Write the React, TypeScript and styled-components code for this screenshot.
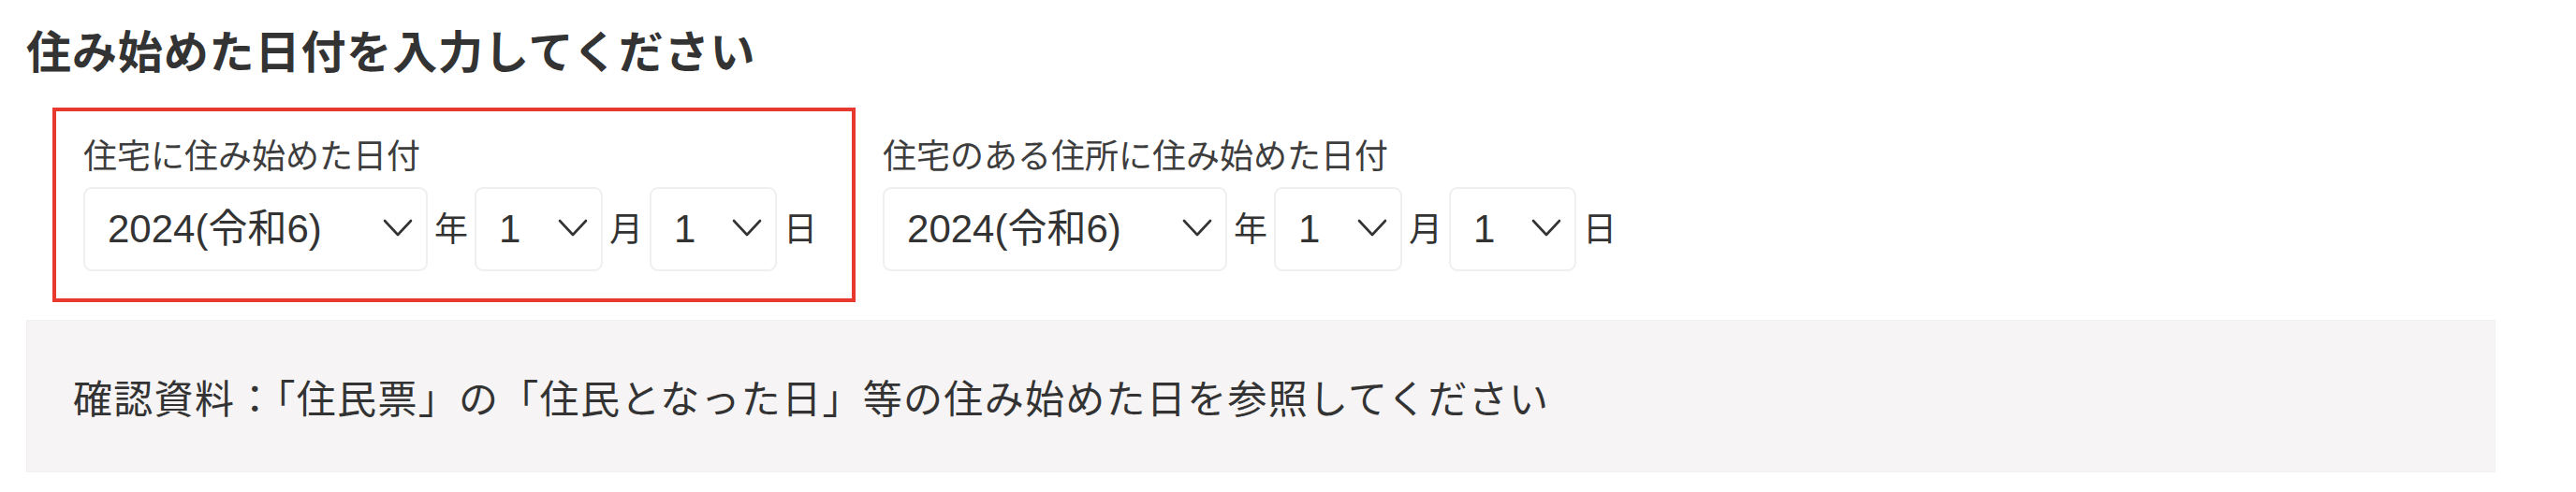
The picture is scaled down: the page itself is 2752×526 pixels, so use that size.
import React from 'react'
import styled, { createGlobalStyle } from 'styled-components'

const GlobalStyle = createGlobalStyle`
  body {
    margin: 0;
    background: #ffffff;
    color: #333333;
    font-family: "Liberation Sans", "Noto Sans CJK JP", sans-serif;
  }
`

type DateValue = { year: string; month: string; day: string }

const fields: { label: string; value: DateValue; highlighted: boolean }[] = [
  {
    label: '住宅に住み始めた日付',
    value: { year: '2024(令和6)', month: '1', day: '1' },
    highlighted: true,
  },
  {
    label: '住宅のある住所に住み始めた日付',
    value: { year: '2024(令和6)', month: '1', day: '1' },
    highlighted: false,
  },
]

function Chevron() {
  return (
    <svg width="32" height="20" viewBox="0 0 32 20" fill="none">
      <polyline
        points="2,2 16,17 30,2"
        stroke="#333"
        strokeWidth="2.6"
        strokeLinecap="round"
        strokeLinejoin="round"
      />
    </svg>
  )
}

function DateSelect({ value, width }: { value: string; width: number }) {
  return (
    <SelectBox $width={width}>
      <SelectValue>{value}</SelectValue>
      <Chevron />
    </SelectBox>
  )
}

export default function App() {
  return (
    <>
      <GlobalStyle />
      <Page>
        <Heading>住み始めた日付を入力してください</Heading>

        <FieldRow>
          {fields.map((field) => (
            <FieldGroup key={field.label} $highlighted={field.highlighted}>
              <FieldLabel>{field.label}</FieldLabel>
              <DateRow>
                <DateSelect value={field.value.year} width={368} />
                <Unit>年</Unit>
                <DateSelect value={field.value.month} width={137} />
                <Unit>月</Unit>
                <DateSelect value={field.value.day} width={136} />
                <Unit>日</Unit>
              </DateRow>
            </FieldGroup>
          ))}
        </FieldRow>

        <Note>
          確認資料：「住民票」の「住民となった日」等の住み始めた日を参照してください
        </Note>
      </Page>
    </>
  )
}

const Page = styled.div`
  display: flex;
  flex-direction: column;
  align-items: flex-start;
  padding: 19px 0 0 28px;
`

const Heading = styled.h2`
  margin: 0;
  font-family: "Noto Sans CJK JP", sans-serif;
  font-size: 48px;
  font-weight: 700;
  line-height: 67px;
  letter-spacing: 0.9px;
  color: #333333;
`

const FieldRow = styled.div`
  display: flex;
  align-items: flex-start;
  gap: 25px;
  margin: 29px 0 0 28px;
`

const FieldGroup = styled.div<{ $highlighted: boolean }>`
  display: flex;
  flex-direction: column;
  border: 4px solid ${(p) => (p.$highlighted ? '#e8392e' : 'transparent')};
  padding: ${(p) => (p.$highlighted ? '20px 30px 29px 29px' : '20px 0 29px 0')};
`

const FieldLabel = styled.div`
  font-family: "Noto Sans CJK JP", sans-serif;
  font-size: 36px;
  line-height: 50px;
  color: #3d3d3d;
  margin-bottom: 11px;
`

const DateRow = styled.div`
  display: flex;
  align-items: center;
`

const SelectBox = styled.div<{ $width: number }>`
  display: flex;
  align-items: center;
  justify-content: space-between;
  box-sizing: border-box;
  width: ${(p) => p.$width}px;
  height: 90px;
  padding: 0 14px 0 24px;
  background: #ffffff;
  border: 2px solid #efefef;
  border-radius: 9px;

  svg {
    flex-shrink: 0;
    margin-top: -2px;
  }
`

const SelectValue = styled.span`
  font-family: "Liberation Sans", "Noto Sans CJK JP", sans-serif;
  font-size: 42px;
  line-height: 1;
  color: #333333;
  white-space: nowrap;
`

const Unit = styled.span`
  font-family: "Noto Sans CJK JP", sans-serif;
  font-size: 36px;
  line-height: 1;
  margin: 0 7px;
  color: #333333;
  align-self: center;
  padding-bottom: 6px;
`

const Note = styled.div`
  box-sizing: border-box;
  width: 2638px;
  height: 163px;
  margin-top: 19px;
  display: flex;
  align-items: center;
  padding-left: 49px;
  background: #f6f4f5;
  border: 1px solid #f1eff1;
  font-family: "Noto Sans CJK JP", sans-serif;
  font-size: 42px;
  letter-spacing: 1.3px;
  color: #333333;
`
